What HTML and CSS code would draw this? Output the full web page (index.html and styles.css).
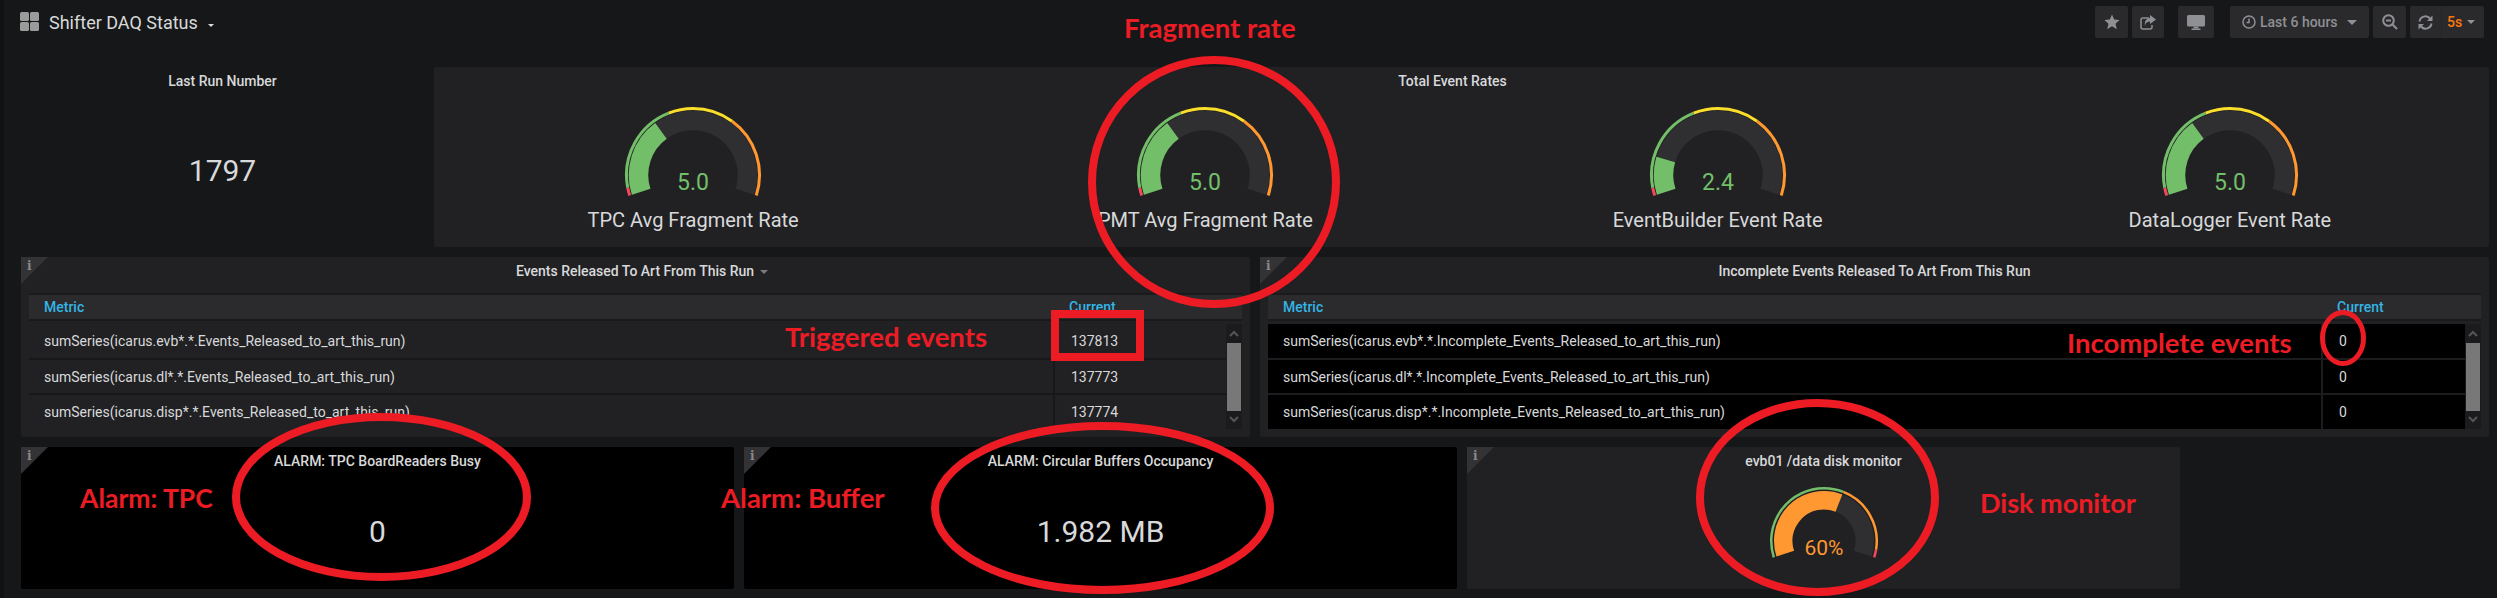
FILE: index.html
```html
<!DOCTYPE html>
<html>
<head>
	<meta charset="utf-8">
	<title>Shifter DAQ Status</title>
	<link rel="stylesheet" href="styles.css">
</head>
<body>
	<div class="navbar">
		<svg class="grid-icon" width="19" height="19" viewBox="0 0 19 19"><rect x="0" y="0" width="9" height="9" rx="1.5"/><rect x="10" y="0" width="9" height="9" rx="1.5"/><rect x="0" y="10" width="9" height="9" rx="1.5"/><rect x="10" y="10" width="9" height="9" rx="1.5"/></svg>
		<span class="dash-title">Shifter DAQ Status</span>
		<span class="caret-small"></span>
		<div class="nav-buttons">
			<div class="nav-btn btn-star">
				<svg width="16" height="16" viewBox="0 0 16 16"><polygon class="ico-fill" points="8,0.5 10.2,5.6 15.6,6.1 11.5,9.7 12.8,15.2 8,12.3 3.2,15.2 4.5,9.7 0.4,6.1 5.8,5.6"/></svg>
			</div>
			<div class="nav-btn btn-share">
				<svg width="16" height="15" viewBox="0 0 16 15"><path class="ico-line" d="M9 3H3a2 2 0 0 0-2 2v7a2 2 0 0 0 2 2h7a2 2 0 0 0 2-2v-2"/><path class="ico-fill" d="M10 0l6 4.5-6 4.5V6.500C7.500 6.500 5.500 7.500 5 10.500 4.200 6.500 6.500 3.200 10 3z"/></svg>
			</div>
			<div class="nav-btn btn-tv">
				<svg width="18" height="15" viewBox="0 0 18 15"><rect class="ico-fill" x="0" y="0" width="18" height="11.500" rx="1.500"/><rect class="ico-fill" x="6.500" y="11.500" width="5" height="2"/><rect class="ico-fill" x="4.500" y="13.500" width="9" height="1.500"/></svg>
			</div>
			<div class="nav-btn btn-time">
				<svg width="14" height="14" viewBox="0 0 14 14"><circle class="ico-line" cx="7" cy="7" r="6"/><path class="ico-line" d="M7 3.500V7.500H4.500"/></svg>
				<span class="time-label">Last 6 hours</span>
				<span class="caret"></span>
			</div>
			<div class="nav-btn btn-zoom">
				<svg width="16" height="16" viewBox="0 0 16 16"><circle class="ico-line thick" cx="6.500" cy="6.500" r="5.300"/><path class="ico-line thick" d="M4 6.500H9M10.500 10.500L15 15"/></svg>
			</div>
			<div class="nav-btn btn-refresh">
				<div class="refresh-icon">
					<svg width="15" height="15" viewBox="0 0 15 15"><path class="ico-line thick" d="M1.500 6.500A6 6 0 0 1 12 3.500"/><path class="ico-fill" d="M14.500 0.500V6H9z"/><path class="ico-line thick" d="M13.500 8.500A6 6 0 0 1 3 11.500"/><path class="ico-fill" d="M0.500 14.500V9H6z"/></svg>
				</div>
				<div class="refresh-rate"><span>5s</span><span class="caret caret-tiny"></span></div>
			</div>
		</div>
	</div>

	<div class="row row-top">
		<div class="panel panel-clear">
			<div class="panel-title">Last Run Number</div>
			<div class="stat stat-top">1797</div>
		</div>
		<div class="panel">
			<div class="panel-title title-rates">Total Event Rates</div>
			<div class="gauges">
				<div class="gauge">
					<svg width="140" height="100" viewBox="0 0 140 100">
						<defs>
							<path id="arc-main" pathLength="100" d="M18.170 84.840A54.500 54.500 0 1 1 121.830 84.840"/>
							<path id="arc-limit" pathLength="100" d="M6.750 88.550A66.500 66.500 0 1 1 133.250 88.550"/>
							<path id="disk-main" pathLength="100" d="M17.250 66.590A40.750 40.750 0 1 1 94.750 66.590"/>
							<path id="disk-limit" pathLength="100" d="M5.830 70.300A52.750 52.750 0 1 1 106.170 70.300"/>
						</defs>
						<use href="#arc-main" class="arc-track"/>
						<use href="#arc-main" class="arc-value" stroke-dasharray="33.300 100"/>
						<use href="#arc-limit" class="lim lim-red"/>
						<use href="#arc-limit" class="lim lim-green"/>
						<use href="#arc-limit" class="lim lim-yellow"/>
						<use href="#arc-limit" class="lim lim-orange"/>
						<text x="70" y="82.500" class="gauge-value">5.0</text>
					</svg>
					<div class="gauge-label">TPC Avg Fragment Rate</div>
				</div>
				<div class="gauge">
					<svg width="140" height="100" viewBox="0 0 140 100">
						<use href="#arc-main" class="arc-track"/>
						<use href="#arc-main" class="arc-value" stroke-dasharray="33.300 100"/>
						<use href="#arc-limit" class="lim lim-red"/>
						<use href="#arc-limit" class="lim lim-green"/>
						<use href="#arc-limit" class="lim lim-yellow"/>
						<use href="#arc-limit" class="lim lim-orange"/>
						<text x="70" y="82.500" class="gauge-value">5.0</text>
					</svg>
					<div class="gauge-label">PMT Avg Fragment Rate</div>
				</div>
				<div class="gauge">
					<svg width="140" height="100" viewBox="0 0 140 100">
						<use href="#arc-main" class="arc-track"/>
						<use href="#arc-main" class="arc-value" stroke-dasharray="16 100"/>
						<use href="#arc-limit" class="lim lim-red"/>
						<use href="#arc-limit" class="lim lim-green"/>
						<use href="#arc-limit" class="lim lim-yellow"/>
						<use href="#arc-limit" class="lim lim-orange"/>
						<text x="70" y="82.500" class="gauge-value">2.4</text>
					</svg>
					<div class="gauge-label">EventBuilder Event Rate</div>
				</div>
				<div class="gauge">
					<svg width="140" height="100" viewBox="0 0 140 100">
						<use href="#arc-main" class="arc-track"/>
						<use href="#arc-main" class="arc-value" stroke-dasharray="33.300 100"/>
						<use href="#arc-limit" class="lim lim-red"/>
						<use href="#arc-limit" class="lim lim-green"/>
						<use href="#arc-limit" class="lim lim-yellow"/>
						<use href="#arc-limit" class="lim lim-orange"/>
						<text x="70" y="82.500" class="gauge-value">5.0</text>
					</svg>
					<div class="gauge-label">DataLogger Event Rate</div>
				</div>
			</div>
		</div>
	</div>

	<div class="row row-mid">
		<div class="panel has-info">
			<span class="info-corner"><i>i</i></span>
			<div class="panel-title">Events Released To Art From This Run<span class="caret-title"></span></div>
			<div class="tbl">
				<div class="tbl-head"><span>Metric</span><span>Current</span></div>
				<div class="tbl-body">
					<div class="tbl-rows">
						<div class="tbl-row"><span>sumSeries(icarus.evb*.*.Events_Released_to_art_this_run)</span><span>137813</span></div>
						<div class="tbl-row"><span>sumSeries(icarus.dl*.*.Events_Released_to_art_this_run)</span><span>137773</span></div>
						<div class="tbl-row"><span>sumSeries(icarus.disp*.*.Events_Released_to_art_this_run)</span><span>137774</span></div>
					</div>
					<div class="scrollbar">
						<svg width="10" height="7" viewBox="0 0 10 7"><path d="M1 6L5 2 9 6"/></svg>
						<div class="thumb"></div>
						<svg width="10" height="7" viewBox="0 0 10 7"><path d="M1 1L5 5 9 1"/></svg>
					</div>
				</div>
			</div>
		</div>
		<div class="panel has-info">
			<span class="info-corner"><i>i</i></span>
			<div class="panel-title">Incomplete Events Released To Art From This Run</div>
			<div class="tbl tbl-black">
				<div class="tbl-head"><span>Metric</span><span>Current</span></div>
				<div class="tbl-body">
					<div class="tbl-rows">
						<div class="tbl-row"><span>sumSeries(icarus.evb*.*.Incomplete_Events_Released_to_art_this_run)</span><span>0</span></div>
						<div class="tbl-row"><span>sumSeries(icarus.dl*.*.Incomplete_Events_Released_to_art_this_run)</span><span>0</span></div>
						<div class="tbl-row"><span>sumSeries(icarus.disp*.*.Incomplete_Events_Released_to_art_this_run)</span><span>0</span></div>
					</div>
					<div class="scrollbar">
						<svg width="10" height="7" viewBox="0 0 10 7"><path d="M1 6L5 2 9 6"/></svg>
						<div class="thumb"></div>
						<svg width="10" height="7" viewBox="0 0 10 7"><path d="M1 1L5 5 9 1"/></svg>
					</div>
				</div>
			</div>
		</div>
	</div>

	<div class="row row-low">
		<div class="panel panel-black has-info">
			<span class="info-corner"><i>i</i></span>
			<div class="panel-title">ALARM: TPC BoardReaders Busy</div>
			<div class="stat stat-low">0</div>
		</div>
		<div class="panel panel-black has-info">
			<span class="info-corner"><i>i</i></span>
			<div class="panel-title">ALARM: Circular Buffers Occupancy</div>
			<div class="stat stat-low">1.982 MB</div>
		</div>
		<div class="panel has-info">
			<span class="info-corner"><i>i</i></span>
			<div class="panel-title">evb01 /data disk monitor</div>
			<div class="disk">
				<svg width="112" height="75" viewBox="0 0 112 75">
					<use href="#disk-main" class="arc-track disk-w"/>
					<use href="#disk-main" class="arc-disk disk-w" stroke-dasharray="60 100"/>
					<use href="#disk-limit" class="lim lim-thin disk-green"/>
					<use href="#disk-limit" class="lim lim-thin disk-orange"/>
					<use href="#disk-limit" class="lim lim-thin disk-red"/>
					<text x="56" y="67.500" class="gauge-value disk-value">60%</text>
				</svg>
			</div>
		</div>
	</div>

	<!-- red notes drawn on top of the screenshot -->
	<svg class="marks" width="2497" height="598" viewBox="0 0 2497 598">
		<ellipse cx="1214" cy="182" rx="122" ry="122"/>
		<ellipse cx="381.500" cy="497" rx="145.500" ry="80"/>
		<ellipse cx="1102.500" cy="508" rx="167.500" ry="82"/>
		<ellipse cx="1817.500" cy="497.500" rx="117.500" ry="94.500"/>
		<ellipse class="thin" cx="2343" cy="338" rx="20.500" ry="25.500"/>
		<rect x="1055" y="314" width="85" height="43"/>
	</svg>
	<span class="note note-frag">Fragment rate</span>
	<span class="note note-trig">Triggered events</span>
	<span class="note note-inc">Incomplete events</span>
	<span class="note note-tpc">Alarm: TPC</span>
	<span class="note note-buf">Alarm: Buffer</span>
	<span class="note note-disk">Disk monitor</span>
</body>
</html>
```

FILE: styles.css
```css
html, body{margin:0; padding:0; height:598px; overflow:hidden;}
body{position:relative; box-sizing:border-box; background:#161719; border-left:4px solid #111214; padding:0 8px 0 17px; color:#d8d9da; font-family:Roboto, "Liberation Sans", sans-serif; font-size:14px;}

/* top bar */
.navbar{display:flex; align-items:flex-start; height:61px; padding-top:6px; margin-left:-1px;}
.grid-icon{margin-top:6px; fill:#9b9b9b;}
.dash-title{margin-left:10px; font-size:18px; line-height:34px; color:#d8d9da;}
.caret-small{margin:18px 0 0 10px; border-left:3px solid transparent; border-right:3px solid transparent; border-top:3px solid #d8d9da;}
.nav-buttons{display:flex; margin-left:auto; margin-right:5px;}
.nav-btn{display:flex; align-items:center; justify-content:center; height:32px; background:#2a2a2d; border-radius:2px; color:#8e9094;}
.btn-star{width:33px;}
.btn-share{width:32px; margin-left:4px;}
.btn-tv{width:36px; margin-left:14px;}
.btn-time{width:139px; margin-left:16px; box-sizing:border-box; justify-content:flex-start; padding-left:12px;}
.btn-zoom{width:33px; margin-left:4px;}
.btn-refresh{width:74px; margin-left:4px;}
.time-label{margin-left:4px; font-weight:500; font-size:14px;}
.ico-fill{fill:#8e9094;}
.ico-line{fill:none; stroke:#8e9094; stroke-width:1.5;}
.ico-line.thick{stroke-width:2;}
.caret{margin-left:9px; border-left:5px solid transparent; border-right:5px solid transparent; border-top:5px solid #8e9094;}
.caret-tiny{margin-left:5px; border-left-width:4px; border-right-width:4px; border-top-width:4px;}
.refresh-icon{display:flex; align-items:center; justify-content:center; width:31px; height:32px; border-right:1px solid #252528;}
.refresh-rate{flex:1; display:flex; align-items:center; padding-left:5px; color:#ff780a; font-weight:500;}

/* panels */
.row{display:grid; gap:10px; margin-bottom:10px;}
.row-top{grid-template-columns:403px 1fr; height:180px;}
.row-mid{grid-template-columns:1fr 1fr; height:180px;}
.row-low{grid-template-columns:repeat(3, 713px); height:142px;}
.panel{position:relative; background:#212124; border-radius:2px; min-width:0;}
.panel-clear{background:transparent;}
.panel-black{background:#000;}
.panel-title{height:28px; line-height:28px; text-align:center; font-weight:500; font-size:14px;}
.title-rates{padding-right:18px;}
.caret-title{display:inline-block; margin:0 -13px 0 6px; width:0; vertical-align:middle; border-left:4px solid transparent; border-right:4px solid transparent; border-top:4px solid #7b7b7b;}
.info-corner{position:absolute; left:0; top:0; width:27px; height:27px; background:#333336; clip-path:polygon(0 0, 100% 0, 0 100%);}
.info-corner i{position:absolute; left:6px; top:1px; font:bold 12px/16px "DejaVu Serif", serif; color:#8a8a8a;}

.stat{text-align:center; font-size:30px; line-height:36px; color:#d8d9da;}
.stat-top{margin-top:58px;}
.stat-low{margin-top:39px;}

/* gauges */
.gauges{display:flex; padding:12px 3px 0;}
.gauge{flex:1; display:flex; flex-direction:column; align-items:center;}
.gauge svg, .disk svg{display:block;}
.gauge-label{height:26px; line-height:26px; font-size:20px; color:#d8d9da;}
.gauge-value{font-size:23px; fill:#73bf69; text-anchor:middle;}
.disk-value{font-size:21px; fill:#ff9830;}
.disk{display:flex; justify-content:center; padding-top:12px;}
.arc-track, .arc-value, .arc-disk, .lim{fill:none;}
.arc-track{stroke:#2f2f32; stroke-width:19.500;}
.arc-value{stroke:#73bf69; stroke-width:19.500;}
.arc-disk{stroke:#ff9830;}
.disk-w{stroke-width:18.500;}
.lim{stroke-width:3;}
.lim-red{stroke:#f2495c; stroke-dasharray:3.300 100;}
.lim-green{stroke:#73bf69; stroke-dasharray:0 3.300 36.700 100;}
.lim-yellow{stroke:#fade2a; stroke-dasharray:0 40 26.700 100;}
.lim-orange{stroke:#ff9830; stroke-dasharray:0 66.700 33.300 100;}
.lim-thin{stroke-width:2.500;}
.disk-green{stroke:#73bf69; stroke-dasharray:60 100;}
.disk-orange{stroke:#ff9830; stroke-dasharray:0 60 36 100;}
.disk-red{stroke:#f2495c; stroke-dasharray:0 96 4 100;}

/* tables */
.tbl{margin:8px 8px 0;}
.tbl-head{display:grid; grid-template-columns:1fr 189px; box-sizing:content-box; height:24px; line-height:24px; background:#2b2b2e; border-top:2px solid #1a1a1c; border-bottom:2px solid #1a1a1c; color:#33b5e5; font-weight:500;}
.tbl-head span{padding-left:15px;}
.tbl-head span + span{padding-left:16px;}
.tbl-black .tbl-head{grid-template-columns:1fr 160px;}
.tbl-body{display:flex; height:105px; margin-top:3px;}
.tbl-rows{flex:1; display:flex; flex-direction:column; gap:2px; background:#18181a;}
.tbl-row{flex:1; display:grid; grid-template-columns:1fr 171px; gap:2px; background:#18181a;}
.tbl-row span{display:flex; align-items:center; padding-left:15px; background:#212124;}
.tbl-row span + span{padding-left:16px;}
.tbl-black .tbl-rows, .tbl-black .tbl-row{background:#1c1c1f;}
.tbl-black .tbl-row{grid-template-columns:1fr 142px;}
.tbl-black .tbl-row span{background:#000;}
.scrollbar{width:16px; display:flex; flex-direction:column; align-items:center; justify-content:space-between; background:#1b1b1e; padding:6px 0; box-sizing:border-box;}
.scrollbar svg{fill:none; stroke:#555; stroke-width:2;}
.thumb{width:14px; height:68px; background:#787878;}

/* annotations */
.marks{position:absolute; left:-4px; top:0; pointer-events:none;}
.marks ellipse, .marks rect{fill:none; stroke:#ed1c24; stroke-width:8;}
.marks .thin{stroke-width:5;}
.note{position:absolute; line-height:30px; font-family:Lato, "Open Sans", sans-serif; font-weight:700; font-size:27.500px; color:#ed1c24; white-space:nowrap;}
.note-frag{left:1120px; top:13px;}
.note-trig{left:781px; top:322px;}
.note-inc{left:2063px; top:328px;}
.note-tpc{left:76px; top:483px; font-size:26.500px;}
.note-buf{left:717px; top:483px;}
.note-disk{left:1976px; top:488px; font-size:27px;}
```
